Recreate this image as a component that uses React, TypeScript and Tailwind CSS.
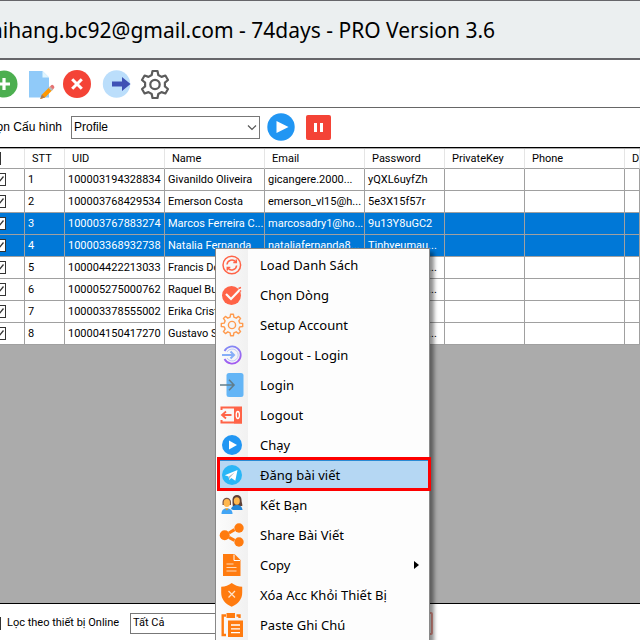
import type { ReactNode } from "react";

type Account = {
  stt: number;
  uid: string;
  name: string;
  email: string;
  password: string;
  selected?: boolean;
};

const accounts: Account[] = [
  { stt: 1, uid: "100003194328834", name: "Givanildo Oliveira", email: "gicangere.2000...", password: "yQXL6uyfZh" },
  { stt: 2, uid: "100003768429534", name: "Emerson Costa", email: "emerson_vl15@h...", password: "5e3X15f57r" },
  { stt: 3, uid: "100003767883274", name: "Marcos Ferreira C...", email: "marcosadry1@ho...", password: "9u13Y8uGC2", selected: true },
  { stt: 4, uid: "100003368932738", name: "Natalia Fernanda", email: "nataliafernanda8...", password: "Tinhyeumau...", selected: true },
  { stt: 5, uid: "100004422213033", name: "Francis Do", email: "", password: "Tinhyeumau..." },
  { stt: 6, uid: "100005275000762", name: "Raquel Bu", email: "", password: "Tinhyeumau..." },
  { stt: 7, uid: "100003378555002", name: "Erika Cristi", email: "", password: "" },
  { stt: 8, uid: "100004150417270", name: "Gustavo S", email: "", password: "Tinhyeumau..." },
];

const gridFont = "font-['Roboto','Liberation_Sans',sans-serif] text-[11px]";
const formFont = "font-['Liberation_Sans',sans-serif] text-[12px]";

function gearPath(teeth: number, outer: number, inner: number, c: number) {
  const step = (Math.PI * 2) / teeth;
  const pts: string[] = [];
  for (let i = 0; i < teeth; i++) {
    const a = i * step - Math.PI / 2;
    const marks: [number, number][] = [
      [a - step * 0.3, inner],
      [a - step * 0.17, outer],
      [a + step * 0.17, outer],
      [a + step * 0.3, inner],
    ];
    marks.forEach(([t, r]) => pts.push(`${(c + Math.cos(t) * r).toFixed(2)} ${(c + Math.sin(t) * r).toFixed(2)}`));
  }
  return `M${pts.join("L")}Z`;
}

function Check({ label, id, checked = false }: { label?: string; id?: string; checked?: boolean }) {
  return (
    <span className="grid size-[13px] shrink-0">
      <input
        type="checkbox"
        id={id}
        aria-label={label}
        defaultChecked={checked}
        className="peer col-start-1 row-start-1 size-[13px] appearance-none border border-[#333] bg-white"
      />
      <svg viewBox="0 0 13 13" className="pointer-events-none invisible col-start-1 row-start-1 size-[13px] peer-checked:visible">
        <path d="M2.5 6.5l3 3 5-6" fill="none" stroke="#333" strokeWidth="1.3" />
      </svg>
    </span>
  );
}

function Glyph({ children }: { children: ReactNode }) {
  return (
    <svg viewBox="0 0 24 24" className="size-6 shrink-0 overflow-visible" aria-hidden="true">
      {children}
    </svg>
  );
}

const menuItems: { label: string; icon: ReactNode; active?: boolean; sub?: boolean }[] = [
  {
    label: "Load Danh Sách",
    icon: (
      <g fill="none" stroke="#ff6347" strokeWidth="1.5">
        <circle cx="11.8" cy="12" r="8.8" />
        <path d="M7 11.5a4.9 4.9 0 0 1 8.8-2.5M16.6 12.5a4.9 4.9 0 0 1-8.8 2.5" />
        <path d="M16.3 6.5v3h-3M7.3 17.5v-3h3" />
      </g>
    ),
  },
  {
    label: "Chọn Dòng",
    icon: (
      <>
        <circle cx="11.5" cy="12.5" r="9.5" fill="#ff6347" />
        <path d="M6 11l5 5L21.5 5" fill="none" stroke="#fbfbfb" strokeWidth="2.2" />
        <path d="M18.5 5.5l2.5-1M20 8.5l1-1" stroke="#ff6347" strokeWidth="1.5" />
      </>
    ),
  },
  {
    label: "Setup Account",
    icon: (
      <g fill="none" stroke="#ff9a4d" strokeWidth="1.4" strokeLinejoin="round">
        <path d={gearPath(8, 10.8, 8, 12)} />
        <circle cx="12" cy="12" r="3.6" />
      </g>
    ),
  },
  {
    label: "Logout - Login",
    icon: (
      <>
        <defs>
          <linearGradient id="ring" x1="0" y1="0" x2="0.3" y2="1">
            <stop offset="0" stopColor="#7f8df5" />
            <stop offset="1" stopColor="#a25cf0" />
          </linearGradient>
        </defs>
        <path d="M4.5 8a8.6 8.6 0 1 1 0 8" fill="none" stroke="url(#ring)" strokeWidth="1.8" />
        <path d="M7 9a6 6 0 1 1 0 6" fill="none" stroke="#a9b5fa" strokeWidth="0.7" />
        <path d="M2 12h12M10.5 8.5l3.5 3.5-3.5 3.5" fill="none" stroke="#86aef8" strokeWidth="2" />
      </>
    ),
  },
  {
    label: "Login",
    icon: (
      <>
        <rect x="6.5" y="0" width="17" height="24" rx="2.5" fill="#64b5f6" />
        <path d="M0 12h14M9 6.8l5 5.2-5 5.2" fill="none" stroke="#607d8b" strokeWidth="1.6" />
      </>
    ),
  },
  {
    label: "Logout",
    icon: (
      <>
        <path d="M1.5 7V4.5h19.5v15H1.5V17" fill="none" stroke="#ff6347" strokeWidth="2" />
        <path d="M14 4h8v16.5h-8z" fill="#ff6347" />
        <path d="M11.5 12H2M6 8.5L2 12l4 3.5" fill="none" stroke="#ff6347" strokeWidth="1.8" />
        <ellipse cx="17.8" cy="12" rx="1.6" ry="3.5" fill="none" stroke="#fff" strokeWidth="1.3" />
      </>
    ),
  },
  {
    label: "Chạy",
    icon: (
      <>
        <circle cx="12" cy="12" r="10" fill="#2196f3" />
        <path d="M9 7.5l8 4.500-8 4.500z" fill="#fff" />
      </>
    ),
  },
  {
    label: "Đăng bài viết",
    active: true,
    icon: (
      <>
        <circle cx="12" cy="12" r="10" fill="#29b6f6" />
        <path d="M4.8 12.2L17.5 7l-2.2 10.8-4-2.7-2 2-.8-3.6z" fill="#fff" />
        <path d="M8.800 13.600l6-4.300-4.700 5.200-.7 2.300z" fill="#b0bec5" />
      </>
    ),
  },
  {
    label: "Kết Bạn",
    icon: (
      <>
        <path d="M12.5 10V6.5a4.5 4.5 0 0 1 9 0c0 3 1 4 .8 6.500h-9.500z" fill="#5d4037" />
        <ellipse cx="16.8" cy="8" rx="3" ry="3.7" fill="#ffb74d" />
        <path d="M11 16c1-3 3-4 5.800-4s5.200 1 5.700 5H13z" fill="#2186d8" />
        <path d="M2.5 9a4.200 4.200 0 0 1 8.500 0v3h-8.500z" fill="#795548" />
        <ellipse cx="6.8" cy="10" rx="3.2" ry="4" fill="#ffb74d" />
        <path d="M1.5 21c0-4 2-5.500 5.300-5.500S12.500 17 12.500 21z" fill="#42a5f5" />
        <path d="M5 15.500h3.600l-1.800 2z" fill="#ff9800" />
      </>
    ),
  },
  {
    label: "Share Bài Viết",
    icon: (
      <g fill="#ff7b0f">
        <path d="M9 10l5.500-3.300M9 14.300l5.500 3" stroke="#ff7b0f" strokeWidth="3.2" />
        <circle cx="4.7" cy="12.2" r="5" />
        <circle cx="19" cy="5" r="4.7" />
        <circle cx="19" cy="19" r="4.7" />
      </g>
    ),
  },
  {
    label: "Copy",
    sub: true,
    icon: (
      <>
        <path d="M3 1h11.500l6 6v16H3z" fill="#ff7b0f" />
        <path d="M14 1.500V7.500h6" fill="none" stroke="#fff" strokeWidth="1" />
        <path d="M6.500 11h7M6.500 14.500h10M6.500 18h10" stroke="#ffd9b8" strokeWidth="1.2" />
      </>
    ),
  },
  {
    label: "Xóa Acc Khỏi Thiết Bị",
    icon: (
      <>
        <path d="M11.7 0c3 2.3 6.5 3.5 10.5 3.8v6c0 6.2-3.8 11-10.500 14C5 20.800 1.200 16 1.200 9.800v-6C5.200 3.500 8.700 2.300 11.700 0z" fill="#ff7b0f" />
        <path d="M8.500 8l6.500 6.500M15 8l-6.500 6.500" stroke="#ffe3c9" strokeWidth="1.3" />
      </>
    ),
  },
  {
    label: "Paste Ghi Chú",
    icon: (
      <>
        <path d="M6 22H2.700V2.500H6M16.500 2.500h3V5" fill="none" stroke="#ff7b0f" strokeWidth="2.4" />
        <path d="M6.500 0h8.500v5H6.500z" fill="#ff7b0f" />
        <path d="M8 7.500h15V24H8z" fill="#ff7b0f" />
        <path d="M11 12h9M11 15.800h9M11 19.600h9" stroke="#fff" strokeWidth="1.3" />
      </>
    ),
  },
];

function ContextMenu() {
  return (
    <div
      role="menu"
      className="absolute top-[248px] bottom-0 left-[215px] w-[215px] border-t border-x border-[#888] bg-[#fdfdfd] bg-linear-to-r from-[#fcfcfc] to-[#f1f1f1] bg-[length:32px_100%] bg-no-repeat pt-px font-['Noto_Sans',sans-serif] text-[13px] text-black shadow-[4px_4px_4px_rgba(0,0,0,0.45)]"
    >
      {menuItems.map((item) => (
        <button
          key={item.label}
          type="button"
          role="menuitem"
          className={
            item.active
              ? "mb-0.5 ml-1 flex h-7 w-[208px] items-center gap-4 border-t border-[#2a8ad4] bg-[#b5d7f3] text-left whitespace-nowrap outline-3 outline-[#fe0000]"
              : "flex h-[30px] w-full items-center gap-4 pl-1 text-left whitespace-nowrap"
          }
        >
          <Glyph>{item.icon}</Glyph>
          <span className="flex-1 pt-0.5">{item.label}</span>
          {item.sub && (
            <svg viewBox="0 0 5 8" className="mr-[10px] h-2 w-[5px]" aria-hidden="true">
              <path d="M0 0l5 4-5 4z" />
            </svg>
          )}
        </button>
      ))}
    </div>
  );
}

function Toolbar() {
  return (
    <nav className="-ml-[10px] flex h-12 shrink-0 items-center gap-[10px] border-b border-[#666]">
      <button type="button" aria-label="Add">
        <svg viewBox="0 0 28 28" className="size-7">
          <circle cx="14" cy="14" r="13.5" fill="#4caf50" />
          <path d="M14 8v12M8 14h12" stroke="#fff" strokeWidth="3.2" />
        </svg>
      </button>
      <button type="button" aria-label="Edit">
        <svg viewBox="0 0 25 28" className="h-7 w-[25px] overflow-visible">
          <path d="M1 1h13.500l6.500 6.500V27.500H1z" fill="#90caf9" />
          <path d="M14.500 1v6.500H21z" fill="#e1f5fe" />
          <path d="M14 24.500l8-8 3 3-8 8-4.500 1.500z" fill="#ff9800" />
          <path d="M14 24.500l-2 4.500 5-1.500z" fill="#b07a4a" />
          <path d="M20.500 18l1.500-1.500 3 3-1.500 1.500z" fill="#b0bec5" />
          <path d="M22 16.500l1.500-1.500q1-.5 2 .5t.8 2.200L25 19.500z" fill="#e57373" />
        </svg>
      </button>
      <button type="button" aria-label="Delete">
        <svg viewBox="0 0 28 28" className="size-7">
          <circle cx="14" cy="14" r="14" fill="#f44336" />
          <path d="M9.200 9.200l9.600 9.600M18.800 9.200l-9.600 9.600" stroke="#fff" strokeWidth="3" />
        </svg>
      </button>
      <button type="button" aria-label="Export">
        <svg viewBox="0 0 30 28" className="h-7 w-[30px]">
          <circle cx="15.5" cy="14" r="13.7" fill="#bbdefb" />
          <path d="M11 11.500h10V7l8.500 7-8.500 7v-4.500H11z" fill="#3f51b5" />
        </svg>
      </button>
      <button type="button" aria-label="Settings">
        <svg viewBox="0 0 28 28" className="size-7 overflow-visible">
          <path
            d="M11.500 1h5l.8 4 3.200 1.900 3.900-1.400 2.600 4.500-3.100 2.600v3.800l3.100 2.600-2.600 4.500-3.900-1.400-3.200 1.900-.8 4h-5l-.8-4-3.200-1.900-3.900 1.400L1 19l3.100-2.600v-3.800L1 10l2.600-4.500 3.900 1.400L10.700 5z"
            fill="none"
            stroke="#5c5c5c"
            strokeWidth="2.2"
            strokeLinejoin="round"
          />
          <circle cx="14" cy="14.5" r="4.7" fill="none" stroke="#5c5c5c" strokeWidth="2.2" />
        </svg>
      </button>
    </nav>
  );
}

export default function App() {
  return (
    <div className="relative flex h-screen flex-col overflow-hidden bg-white text-black">
      <header className="flex h-[60px] shrink-0 items-center border-t border-b-2 border-[#66666a] bg-[#ebeff0]">
        <h1 className="-ml-[9px] pt-0.5 font-['Noto_Sans',sans-serif] text-[21px] whitespace-nowrap">
          aihang.bc92@gmail.com - 74days - PRO Version 3.6
        </h1>
      </header>

      <Toolbar />

      <section className={`flex h-10 shrink-0 items-center border-b border-black pb-px ${formFont}`}>
        <label htmlFor="profile" className="flex w-[62px] justify-end whitespace-nowrap">
          Chọn Cấu hình
        </label>
        <span className="ml-[9px] grid w-[189px] items-center">
          <select
            id="profile"
            className="col-start-1 row-start-1 h-[23px] w-full appearance-none border border-[#777] bg-white pl-[2px]"
          >
            <option>Profile</option>
          </select>
          <svg viewBox="0 0 8 5" className="pointer-events-none col-start-1 row-start-1 mr-1 h-[5px] w-2 justify-self-end overflow-visible">
            <path d="M0 0.5l4 4 4-4" fill="none" stroke="#555" strokeWidth="1.2" />
          </svg>
        </span>
        <button type="button" aria-label="Run" className="ml-[7px]">
          <svg viewBox="0 0 28 28" className="size-7">
            <circle cx="14" cy="14" r="13.7" fill="#2196f3" />
            <path d="M9.500 8l12 6-12 6z" fill="#fff" />
          </svg>
        </button>
        <button
          type="button"
          aria-label="Pause"
          className="ml-[11px] flex size-[25px] items-center justify-center gap-[3px] rounded-xs bg-[#f44336]"
        >
          <span className="h-[9px] w-[3px] bg-white" />
          <span className="h-[9px] w-[3px] bg-white" />
        </button>
      </section>

      <main className="min-h-0 flex-1 overflow-hidden border-t border-[#aaa] bg-[#ababab]">
        <table
          className={`-ml-5 w-[calc(100%+20px)] table-fixed border-separate border-spacing-0 bg-white text-left ${gridFont} leading-4`}
        >
          <colgroup>
            <col className="w-[45px]" />
            <col className="w-10" />
            <col className="w-[100px]" />
            <col className="w-[100px]" />
            <col className="w-[100px]" />
            <col className="w-20" />
            <col className="w-20" />
            <col className="w-[100px]" />
            <col />
          </colgroup>
          <thead>
            <tr className="h-5 *:border-r *:border-b *:border-r-[#e5e5e5] *:border-b-[#a0a0a0] *:p-0 *:pl-[7px] *:font-normal *:whitespace-nowrap">
              <th>
                <div className="pl-px">
                  <Check label="Select all" />
                </div>
              </th>
              <th>STT</th>
              <th>UID</th>
              <th>Name</th>
              <th>Email</th>
              <th>Password</th>
              <th>PrivateKey</th>
              <th>Phone</th>
              <th className="overflow-hidden">Device</th>
            </tr>
          </thead>
          <tbody>
            {accounts.map((a) => (
              <tr
                key={a.stt}
                className={
                  a.selected
                    ? "h-[22px] bg-[#0078d7] text-white *:border-r *:border-b *:border-[#a0a0a0] *:p-0 *:pl-[3px] *:whitespace-nowrap"
                    : "h-[22px] *:border-r *:border-b *:border-[#a0a0a0] *:p-0 *:pl-[3px] *:whitespace-nowrap"
                }
              >
                <td>
                  <div className="pl-[10px]">
                    <Check label={`Select ${a.name}`} checked />
                  </div>
                </td>
                <td>{a.stt}</td>
                <td>{a.uid}</td>
                <td>{a.name}</td>
                <td>{a.email}</td>
                <td>{a.password}</td>
                <td />
                <td />
                <td />
              </tr>
            ))}
          </tbody>
        </table>
      </main>

      <footer className={`-ml-3 flex h-[37px] shrink-0 items-center border-t border-black pt-0.5 ${gridFont}`}>
        <div className="flex w-[142px] items-center gap-[6px] whitespace-nowrap">
          <Check id="online-only" />
          <label htmlFor="online-only">Lọc theo thiết bị Online</label>
        </div>
        <select aria-label="Online" className="h-[21px] w-[180px] appearance-none border border-[#777] bg-white pl-[2px]">
          <option>Tất Cả</option>
        </select>
        <button type="button" aria-label="Stop" className="ml-[97px] h-[23px] w-[26px] rounded-xs border-2 border-[#f2a097]" />
      </footer>

      <ContextMenu />
    </div>
  );
}
